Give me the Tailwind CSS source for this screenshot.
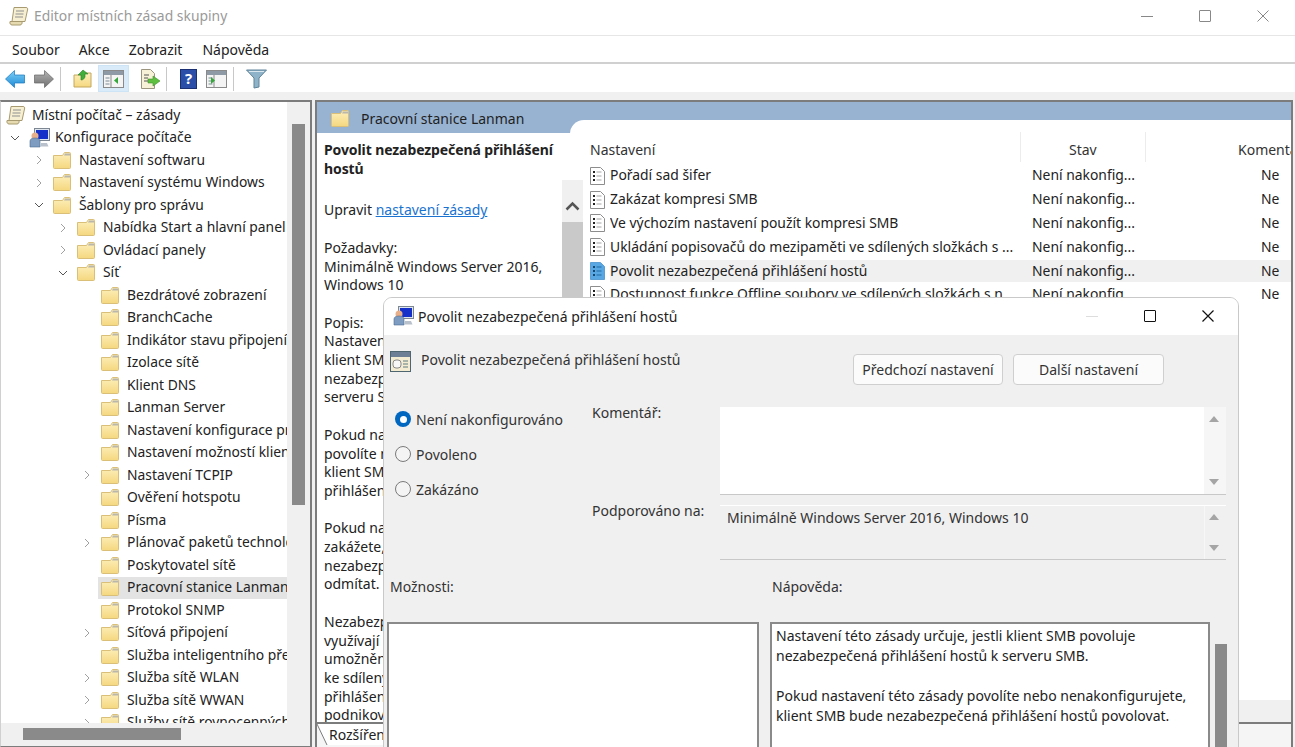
<!DOCTYPE html>
<html lang="cs">
<head>
    <meta charset="UTF-8">
    <meta name="viewport" content="width=device-width, initial-scale=1.0">
    <title>Editor místních zásad skupiny</title>
    <script src="https://cdn.jsdelivr.net/npm/@tailwindcss/browser@4"></script>
</head>
<body class="bg-white">
    <!-- shared icons -->
    <svg class="absolute w-0 h-0">
        <defs>
            <linearGradient id="fold" x1="0" y1="0" x2="0" y2="1"><stop offset="0" stop-color="#fdf0bd"/><stop offset="1" stop-color="#f5d77f"/></linearGradient>
            <linearGradient id="blue" x1="0" y1="0" x2="0" y2="1"><stop offset="0" stop-color="#7fd0f7"/><stop offset="1" stop-color="#1c8ad6"/></linearGradient>
            <linearGradient id="gray" x1="0" y1="0" x2="0" y2="1"><stop offset="0" stop-color="#b4b4b4"/><stop offset="1" stop-color="#707070"/></linearGradient>
        </defs>
        <symbol id="folder" viewBox="0 0 18 17">
            <path d="M.5 3.5h9l2-3h5a1 1 0 0 1 1 1v14a1 1 0 0 1-1 1H1.500a1 1 0 0 1-1-1z" fill="url(#fold)" stroke="#d9bf78"/>
            <path d="M12 1.500h5v2h-6z" fill="#b9b6ac"/>
        </symbol>
        <symbol id="page" viewBox="0 0 15 18">
            <path d="M.5.5h10l4 4v13H.5z" fill="#fff" stroke="#8d8d8d"/>
            <path d="M3 5h2M3 9h2M3 13h2" stroke="#222" stroke-width="2"/>
            <path d="M6.500 5h5M6.500 9h5M6.500 13h5" stroke="#a5a5a5"/>
        </symbol>
        <symbol id="page-on" viewBox="0 0 15 18">
            <path d="M.5.5h10l4 4v13H.5z" fill="#58a6e2" stroke="#5c9fd4"/>
            <path d="M3 5h2M3 9h2M3 13h2" stroke="#17456b" stroke-width="2"/>
            <path d="M6.500 5h5M6.500 9h5M6.500 13h5" stroke="#1f6aa5"/>
        </symbol>
        <symbol id="scroll" viewBox="0 0 20 20">
            <path d="M5 1.500h12c1.500 0 2 1 1.500 2.500L16 15.500H3z" fill="#f6efd2" stroke="#a89a70"/>
            <path d="M1 15.500h12c.5 2-.5 3.500-2 3.500H3c-1.500 0-2.500-1.500-2-3.500z" fill="#e6dbb0" stroke="#a89a70"/>
            <path d="M7 5h8M6.500 8h8M6 11h8" stroke="#8f8f8f"/>
        </symbol>
        <symbol id="computer" viewBox="0 0 21 20">
            <rect x="5.500" y=".5" width="15" height="12" fill="#dfe6ee" stroke="#7d8793"/>
            <rect x="7" y="2" width="12" height="9" fill="#1530c8"/>
            <circle cx="6" cy="8" r="3.500" fill="#e8b08a"/>
            <path d="M1 19v-6c0-2 2-3 5-3s5 1 5 3v6z" fill="#7d9cc0" stroke="#4f6d92" stroke-width=".6"/>
            <path d="M12 15h6l1.500 3.500H11z" fill="#b9c2cc"/>
        </symbol>
        <symbol id="up" viewBox="0 0 20 18"><path d="M9.500.5l-9 8.500 9 8.500V13h10V5h-10z" fill="url(#blue)" stroke="#1776bd" stroke-width=".7" stroke-linejoin="round"/></symbol>
        <symbol id="forward" viewBox="0 0 20 18"><path d="M10.500.5l9 8.500-9 8.500V13H.5V5h10z" fill="url(#gray)" stroke="#666" stroke-width=".7" stroke-linejoin="round"/></symbol>
        <symbol id="pane" viewBox="0 0 21 18">
            <rect x=".5" y=".5" width="20" height="17" fill="#f4f4f4" stroke="#8a8a8a"/>
            <path d="M1 1h19v4H1z" fill="#8e9aa5"/>
            <path d="M8 5v12" stroke="#8a8a8a"/>
            <path d="M2.500 8h4M2.500 11h4M2.500 14h4" stroke="#7d8b96"/>
        </symbol>
    </svg>

    <div class="relative flex flex-col w-[1295px] h-[747px] overflow-hidden bg-white text-[#222] font-['Noto_Sans','Open_Sans',sans-serif]">
        <!-- title bar -->
        <div class="flex items-center h-[36px] shrink-0 border-b border-[#e6e6e6] pl-[9px] pb-[3px]">
            <svg class="w-[20px] h-[20px]"><use href="#scroll"/></svg>
            <span class="ml-[5px] text-[13.900px] text-[#9a9a9a]">Editor místních zásad skupiny</span>
            <div class="ml-auto flex items-center gap-[46px] pr-[26px]">
                <span class="block w-[12px] h-px bg-[#888]"></span>
                <span class="block w-[12px] h-[12px] border border-[#888] rounded-[1px]"></span>
                <svg class="w-[12px] h-[12px]" viewBox="0 0 12 12"><path d="M.5.5l11 11M11.500.5l-11 11" stroke="#888"/></svg>
            </div>
        </div>
        <!-- menu -->
        <div class="flex items-center h-[28px] shrink-0 border-b-2 border-[#d0d0d0] text-[14px] text-[#222]">
            <span class="ml-[12px]">Soubor</span>
            <span class="ml-[19px]">Akce</span>
            <span class="ml-[19px]">Zobrazit</span>
            <span class="ml-[20px]">Nápověda</span>
        </div>
        <!-- toolbar -->
        <div class="flex items-center h-[28px] shrink-0 pl-[5px] pt-[1px]">
            <svg class="w-[20px] h-[18px]"><use href="#up"/></svg>
            <svg class="ml-[9px] w-[20px] h-[18px]"><use href="#forward"/></svg>
            <span class="ml-[6px] w-px h-[24px] bg-[#c8c8c8]"></span>
            <svg class="ml-[12px] w-[20px] h-[20px]" viewBox="0 0 20 20">
                <path d="M1 6h8l2-2h7v14H1z" fill="url(#fold)" stroke="#c2a85f"/>
                <path d="M8 11V6H5l5-5 5 4h-3v3c-1 2-2 3-4 3z" fill="#3fae3a" stroke="#2a7d28" stroke-width=".6"/>
            </svg>
            <span class="ml-[5px] flex items-center justify-center w-[31px] h-[27px] bg-[#d9ebf9] border border-[#cde4f7]">
                <svg class="w-[21px] h-[18px]" viewBox="0 0 21 18">
                    <use href="#pane" width="21" height="18"/>
                    <path d="M15 7v7l-4-3.500z" fill="#35a63a"/>
                </svg>
            </span>
            <svg class="ml-[11px] w-[21px] h-[20px]" viewBox="0 0 21 20">
                <path d="M1.500.5h9l4 4v15h-13z" fill="#f7f1d8" stroke="#9b957f"/>
                <path d="M4 6h5M4 9h4M4 12h4" stroke="#555"/>
                <path d="M13 7l7 5-7 5v-3H8v-4h5z" fill="#5fbf3f" stroke="#3f922b" stroke-width=".6"/>
            </svg>
            <span class="ml-[5px] w-px h-[24px] bg-[#c8c8c8]"></span>
            <span class="ml-[13px] flex items-center justify-center w-[17px] h-[20px] bg-[#2b4fa8] border border-[#1b2f73] text-white text-[15px] font-bold leading-none">?</span>
            <svg class="ml-[9px] w-[21px] h-[18px]" viewBox="0 0 21 18">
                <use href="#pane" width="21" height="18"/>
                <path d="M5 7v7l4-3.500z" fill="#35a63a"/>
            </svg>
            <span class="ml-[6px] w-px h-[24px] bg-[#c8c8c8]"></span>
            <svg class="ml-[12px] w-[21px] h-[20px]" viewBox="0 0 21 20">
                <path d="M.5 1h20l-7.500 8v9l-5 1V9z" fill="#8fb3c9" stroke="#5f8399"/>
                <path d="M3 2.500h15" stroke="#dbe8f0"/>
            </svg>
        </div>
        <div class="h-[8px] shrink-0 bg-[#f0f0f0]"></div>

        <!-- main split -->
        <div class="flex flex-1 min-h-0 bg-[#f0f0f0]">
            <!-- tree pane -->
            <div class="flex flex-col w-[312px] shrink-0 bg-white border-t-2 border-r-2 border-l border-b border-[#7c7c7c] border-l-[#d0d0d0]">
                <div class="relative flex flex-1 min-h-0">
                    <div id="tree" class="flex-1 min-w-0 overflow-hidden pt-[2px]"></div>
                    <div class="w-[23px] shrink-0 bg-[#f0f0f0] pl-[5px] pt-[22px]">
                        <div class="w-[13px] h-[381px] bg-[#8a8a8a]"></div>
                    </div>
                </div>
                <div class="h-[23px] shrink-0 bg-[#f0f0f0] pl-[22px] pt-[5px]">
                    <div class="w-[158px] h-[12px] bg-[#8a8a8a]"></div>
                </div>
            </div>

            <!-- right pane -->
            <div class="flex flex-col ml-[3px] w-[978px] shrink-0 bg-white border-t-2 border-l-2 border-r-2 border-[#7c7c7c]">
                <div class="flex items-center h-[31px] shrink-0 bg-[#98b3d1] pl-[14px] pt-[1px] text-[14px] text-[#1f1f1f]">
                    <svg class="w-[18px] h-[17px]"><use href="#folder"/></svg>
                    <span class="ml-[12px]">Pracovní stanice Lanman</span>
                </div>
                <div class="relative flex flex-1 min-h-0">
                    <!-- description -->
                    <div class="w-[253px] shrink-0 pl-[7px] pt-[8px] overflow-hidden text-[14px] leading-[18.700px] text-[#222] whitespace-nowrap">
                        <p class="font-bold tracking-[-0.1px]">Povolit nezabezpečená přihlášení<br>hostů</p>
                        <p class="mt-[23px]">Upravit <a class="text-[#1a73d0] underline">nastavení zásady</a></p>
                        <p class="mt-[18.700px]">Požadavky:<br>Minimálně Windows Server 2016,<br>Windows 10</p>
                        <p class="mt-[18.700px]">Popis:<br>Nastavení této zásady určuje, jestli<br>klient SMB povoluje<br>nezabezpečená přihlášení hostů k<br>serveru SMB.</p>
                        <p class="mt-[18.700px]">Pokud nastavení této zásady<br>povolíte nebo nenakonfigurujete,<br>klient SMB bude nezabezpečená<br>přihlášení hostů povolovat.</p>
                        <p class="mt-[18.700px]">Pokud nastavení této zásady<br>zakážete, klient SMB bude<br>nezabezpečená přihlášení hostů<br>odmítat.</p>
                        <p class="mt-[18.700px]">Nezabezpečená přihlášení hostů<br>využívají souborové servery<br>umožnění neověřeného přístupu<br>ke sdíleným složkám. Nezabezpečená<br>přihlášení hostů se obvykle v<br>podnikovém prostředí nepoužívají.</p>
                    </div>
                    <!-- settings list -->
                    <div class="relative flex flex-col flex-1 min-w-0 -mt-[13px] bg-white rounded-tl-[14px] pl-[20px] pt-[12px] overflow-hidden">
                        <div class="flex h-[30px] shrink-0 text-[14px] text-[#333] whitespace-nowrap">
                            <span class="w-[430px] shrink-0 pt-[7px]">Nastavení</span>
                            <span class="w-[125px] shrink-0 border-l border-[#ececec] pl-[48px] pt-[7px]">Stav</span>
                            <span class="shrink-0 border-l border-[#ececec] pl-[92px] pt-[7px]">Komentář</span>
                        </div>
                        <div id="rows" class="flex-1 min-h-0 pt-[2px]"></div>
                        <div class="-ml-[20px] h-[22px] shrink-0 bg-[#f0f0f0]"></div>
                    </div>
                    <!-- description scrollbar sits across the list's rounded edge -->
                    <div class="absolute left-[245px] top-[47px] bottom-0 w-[21px] flex flex-col items-center bg-[#f0f0f0]">
                        <svg class="mt-[21px] w-[15px] h-[10px]" viewBox="0 0 15 10"><path d="M1.500 8.500l6-6 6 6" fill="none" stroke="#555" stroke-width="2.500"/></svg>
                        <div class="mt-[11px] w-full flex-1 bg-[#c9c9c9]"></div>
                    </div>
                </div>
                <!-- tab strip -->
                <div class="relative h-[25px] shrink-0 border-t-2 border-[#7c7c7c] bg-[#f5f5f5] text-[14px] pl-[12px]">
                    <svg class="absolute left-0 -top-[2px] w-[70px] h-[25px]" viewBox="0 0 70 25"><path d="M0 2l10 21h60V2z" fill="#fff"/><path d="M0 2l10 21" stroke="#7c7c7c" fill="none"/></svg>
                    <span class="relative">Rozšířený</span>
                </div>
            </div>
        </div>

        <!-- settings dialog, floats over the editor -->
        <div class="absolute left-[383px] top-[297px] w-[856px] h-[460px] flex flex-col bg-[#f0f0f0] border border-[#c9c9c9] rounded-t-[9px] overflow-hidden text-[14px] text-[#333]">
            <div class="flex items-center h-[37px] shrink-0 bg-white pl-[9px] pb-[1px] text-[#222]">
                <svg class="w-[21px] h-[20px]"><use href="#computer"/></svg>
                <span class="ml-[4px]">Povolit nezabezpečená přihlášení hostů</span>
                <div class="ml-auto flex items-center gap-[46px] pr-[24px]">
                    <span class="block w-[12px] h-px bg-[#ddd]"></span>
                    <span class="block w-[12px] h-[12px] border-[1.500px] border-[#111] rounded-[1px]"></span>
                    <svg class="w-[12px] h-[12px]" viewBox="0 0 12 12"><path d="M.5.5l11 11M11.500.5l-11 11" stroke="#111" stroke-width="1.200"/></svg>
                </div>
            </div>

            <div class="flex items-start h-[53px] mt-[19px] shrink-0 pl-[6px] pr-[74px]">
                <svg class="w-[21px] h-[21px] -mt-[3px]" viewBox="0 0 21 21">
                    <rect x=".5" y=".5" width="20" height="20" fill="#f3ecd2" stroke="#4d6670"/>
                    <path d="M1 1h19v5H1z" fill="#6d7f95"/>
                    <rect x="3" y="9" width="8" height="8" rx="3" fill="#f7f7f7" stroke="#888"/>
                    <path d="M13 10h5M13 13h5M13 16h5" stroke="#5d7c82"/>
                </svg>
                <span class="ml-[10px] -mt-[5px]">Povolit nezabezpečená přihlášení hostů</span>
                <button class="ml-auto w-[150px] h-[31px] bg-[#fbfbfb] border border-[#cfcfcf] rounded-[4px]">Předchozí nastavení</button>
                <button class="ml-[10px] w-[151px] h-[31px] bg-[#fbfbfb] border border-[#cfcfcf] rounded-[4px]">Další nastavení</button>
            </div>

            <div class="flex h-[153px] shrink-0">
                <div class="w-[208px] shrink-0 pl-[11px] flex flex-col gap-[11px]">
                    <label class="flex items-center h-[24px]">
                        <span class="flex items-center justify-center w-[16px] h-[16px] rounded-full bg-[#0067c0]"><span class="w-[7px] h-[7px] rounded-full bg-white"></span></span>
                        <span class="ml-[5px]">Není nakonfigurováno</span>
                    </label>
                    <label class="flex items-center h-[24px]">
                        <span class="w-[16px] h-[16px] rounded-full border-[1.500px] border-[#7a7a7a] bg-[#f4f4f4]"></span>
                        <span class="ml-[5px]">Povoleno</span>
                    </label>
                    <label class="flex items-center h-[24px]">
                        <span class="w-[16px] h-[16px] rounded-full border-[1.500px] border-[#7a7a7a] bg-[#f4f4f4]"></span>
                        <span class="ml-[5px]">Zakázáno</span>
                    </label>
                </div>
                <div class="grid grid-cols-[128px_506px] grid-rows-[88px_55px] gap-y-[10px]">
                    <span class="-mt-[4px] leading-[20px]">Komentář:</span>
                    <div class="flex justify-end bg-white border-b border-[#c8c8c8]">
                        <div class="flex flex-col items-center justify-between w-[22px] pr-[3px] py-[9px] bg-[#f0f0f0]/60">
                            <span class="w-0 h-0 border-x-[5px] border-x-transparent border-b-[6px] border-b-[#a5a5a5]"></span>
                            <span class="w-0 h-0 border-x-[5px] border-x-transparent border-t-[6px] border-t-[#a5a5a5]"></span>
                        </div>
                    </div>
                    <span class="-mt-[4px] leading-[20px]">Podporováno na:</span>
                    <div class="flex bg-[#f0f0f0] border-t border-white border-b border-b-[#c8c8c8]">
                        <span class="flex-1 pl-[7px] pt-[2px] leading-[20px]">Minimálně Windows Server 2016, Windows 10</span>
                        <div class="flex flex-col items-center justify-between w-[22px] pr-[3px] py-[8px] border-l border-[#f7f7f7]">
                            <span class="w-0 h-0 border-x-[5px] border-x-transparent border-b-[6px] border-b-[#a5a5a5]"></span>
                            <span class="w-0 h-0 border-x-[5px] border-x-transparent border-t-[6px] border-t-[#a5a5a5]"></span>
                        </div>
                    </div>
                </div>
            </div>

            <div class="flex h-[20px] mt-[17px] shrink-0 pl-[6px] leading-[20px]">
                <span class="w-[382px]">Možnosti:</span>
                <span>Nápověda:</span>
            </div>

            <div class="flex flex-1 min-h-0 mt-[25px] pl-[3px]">
                <div class="w-[372px] bg-white border-2 border-[#8a8a8a]"></div>
                <div class="ml-[11px] w-[440px] bg-white border-2 border-[#8a8a8a] pl-[4px] pt-[2px] leading-[20px] text-[#222] whitespace-nowrap">
                    <p>Nastavení této zásady určuje, jestli klient SMB povoluje<br>nezabezpečená přihlášení hostů k serveru SMB.</p>
                    <p class="mt-[20px]">Pokud nastavení této zásady povolíte nebo nenakonfigurujete,<br>klient SMB bude nezabezpečená přihlášení hostů povolovat.</p>
                </div>
                <div class="ml-[5px] mt-[22px] w-[12px] bg-[#8a8a8a]"></div>
            </div>
        </div>
    </div>

    <script>
        // level, expander (0 none, 1 closed, 2 open), label, icon
        const treeItems = [
            [0, 0, "Místní počítač – zásady", "scroll"],
            [1, 2, "Konfigurace počítače", "computer"],
            [2, 1, "Nastavení softwaru"],
            [2, 1, "Nastavení systému Windows"],
            [2, 2, "Šablony pro správu"],
            [3, 1, "Nabídka Start a hlavní panel"],
            [3, 1, "Ovládací panely"],
            [3, 2, "Síť"],
            [4, 0, "Bezdrátové zobrazení"],
            [4, 0, "BranchCache"],
            [4, 0, "Indikátor stavu připojení"],
            [4, 0, "Izolace sítě"],
            [4, 0, "Klient DNS"],
            [4, 0, "Lanman Server"],
            [4, 0, "Nastavení konfigurace protokolu"],
            [4, 0, "Nastavení možností klienta"],
            [4, 1, "Nastavení TCPIP"],
            [4, 0, "Ověření hotspotu"],
            [4, 0, "Písma"],
            [4, 1, "Plánovač paketů technologie"],
            [4, 0, "Poskytovatel sítě"],
            [4, 0, "Pracovní stanice Lanman", "folder", true],
            [4, 0, "Protokol SNMP"],
            [4, 1, "Síťová připojení"],
            [4, 0, "Služba inteligentního přenosu"],
            [4, 1, "Služba sítě WLAN"],
            [4, 1, "Služba sítě WWAN"],
            [4, 1, "Služby sítě rovnocenných uzlů"],
        ];

        const settings = [
            "Pořadí sad šifer",
            "Zakázat kompresi SMB",
            "Ve výchozím nastavení použít kompresi SMB",
            "Ukládání popisovačů do mezipaměti ve sdílených složkách s ...",
            "Povolit nezabezpečená přihlášení hostů",
            "Dostupnost funkce Offline soubory ve sdílených složkách s n...",
        ];

        const chevrons = {
            1: '<path d="M3 1l4 4-4 4" stroke="#a0a0a0" fill="none"/>',
            2: '<path d="M1 3l4 4 4-4" stroke="#555" fill="none"/>',
        };

        document.getElementById("tree").innerHTML = treeItems.map(([level, exp, label, icon = "folder", active]) => `
            <div class="relative flex items-center h-[22.500px] text-[13.850px] whitespace-nowrap text-[#222]" style="padding-left:${level === 0 ? 5 : 9 + (level - 1) * 24}px">
                ${active ? '<span class="absolute left-[97px] right-0 top-0 bottom-0 bg-[#e3e3e3]"></span>' : ''}
                ${level > 0 ? `<svg class="relative w-[10px] h-[10px] shrink-0" viewBox="0 0 10 10">${chevrons[exp] || ''}</svg>` : ''}
                <svg class="relative shrink-0 ${level === 0 ? 'w-[20px] h-[20px]' : level === 1 ? 'ml-[9px] w-[21px] h-[20px]' : 'ml-[9px] w-[18px] h-[17px]'}"><use href="#${icon}"/></svg>
                <span class="relative ${level === 1 ? 'ml-[5px]' : level === 0 ? 'ml-[6px]' : 'ml-[8px]'}">${label}</span>
            </div>`).join("");

        document.getElementById("rows").innerHTML = settings.map((name, i) => `
            <div class="flex items-center h-[23.800px] text-[13.900px] whitespace-nowrap text-[#222]">
                <svg class="w-[15px] h-[18px] shrink-0"><use href="#${i === 4 ? 'page-on' : 'page'}"/></svg>
                <div class="flex items-center flex-1 h-[22px] ml-[5px] ${i === 4 ? 'bg-[#f0f0f0]' : ''}">
                    <span class="w-[422px] overflow-hidden">${name}</span>
                    <span class="w-[229px]">Není nakonfig...</span>
                    <span>Ne</span>
                </div>
            </div>`).join("");
    </script>
</body>
</html>
